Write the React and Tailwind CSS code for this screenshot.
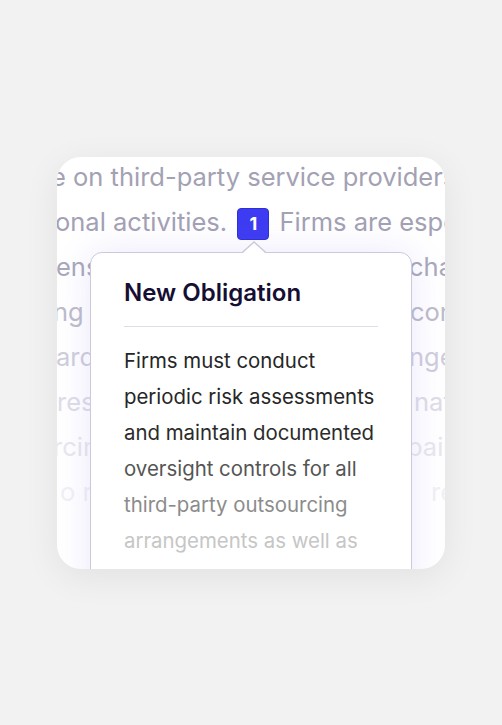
import React from "react";

const bgLines = [
  { left: "e on third-party service providers for", ml: "-ml-[6px]", color: "text-[#a3a1b4]" },
  { badge: true, ml: "-ml-[2px]", color: "text-[#a3a1b4]" },
  { left: "ensure", right: "changes", w: "w-[353px]", ml: "-ml-[1px]", color: "text-[#aaa8ba]" },
  { left: "ng practices", right: "controls", w: "w-[357px]", ml: "-ml-[4px]", color: "text-[#bdbcca]" },
  { left: "ards", right: "ngements", w: "w-[353px]", ml: "-ml-[1px]", color: "text-[#cfcedb]" },
  { left: "resilience", right: "nated", w: "w-[357px]", ml: "-ml-[0px]", color: "text-[#dedde6]" },
  { left: "rcing", right: "pairs", w: "w-[354px]", ml: "-ml-[4px]", color: "text-[#e8e7ee]" },
  { left: "o re", right: "reviews", w: "w-[371px]", ml: "ml-[3px]", color: "text-[#f1f0f5]" }
];

const bodyLines = [
  { text: "Firms must conduct", color: "text-[#262626]" },
  { text: "periodic risk assessments", color: "text-[#262626]" },
  { text: "and maintain documented", color: "text-[#2b2b2b]" },
  { text: "oversight controls for all", color: "text-[#555555]" },
  { text: "third-party outsourcing", color: "text-[#8c8c8c]" },
  { text: "arrangements as well as", color: "text-[#c6c6c6]" }
];

const Badge = () => (
  <span className="mx-[3px] inline-flex h-[32px] w-[32px] items-center justify-center rounded-[4px] border border-[#2f2fd6] bg-[#3e3cf2] align-middle text-[18px] font-bold leading-none text-white">
    1
  </span>
);

const BackgroundText = () => (
  <div className="-mt-[3px] text-[25.5px] leading-[45px]">
    {bgLines.map((line, index) => (
      <div key={index} className={`flex whitespace-nowrap ${line.ml} ${line.color}`}>
        {line.badge ? (
          <span>
            onal activities. <Badge /> Firms are especially
          </span>
        ) : line.right ? (
          <>
            <span className={`${line.w} shrink-0`}>{line.left}</span>
            <span>{line.right}</span>
          </>
        ) : (
          <span>{line.left}</span>
        )}
      </div>
    ))}
  </div>
);

const Popover = () => (
  <div className="absolute left-[33px] top-[95px] h-[420px] w-[322px] rounded-[12px] border-[1.5px] border-[#cbc9de] bg-white px-[33px] pt-[26px] shadow-[0_0_36px_rgba(112,96,230,0.14)]">
    <svg
      className="absolute -top-[12px] left-[151px]"
      width="24"
      height="13"
      viewBox="0 0 24 13"
      fill="none"
    >
      <path d="M0 12.5 L12 1.5 L24 12.5 Z" fill="#ffffff" />
      <path d="M0 11.8 L12 1 L24 11.8" stroke="#cbc9de" strokeWidth="1.5" />
    </svg>
    <h3 className="text-[24px] font-semibold leading-[28px] text-[#160e33]">New Obligation</h3>
    <div className="mt-[19px] h-px bg-[#dedce9]" />
    <div className="mt-[16px] text-[20.4px] leading-[36px]">
      {bodyLines.map((line) => (
        <p key={line.text} className={`whitespace-nowrap ${line.color}`}>
          {line.text}
        </p>
      ))}
    </div>
  </div>
);

export default function App() {
  return (
    <div className="flex min-h-screen items-center justify-center bg-[#f2f2f2] font-['Inter',sans-serif]">
      <div className="relative h-[412px] w-[388px] overflow-hidden rounded-[24px] bg-white shadow-[0_8px_36px_rgba(0,0,0,0.07)]">
        <BackgroundText />
        <Popover />
      </div>
    </div>
  );
}
